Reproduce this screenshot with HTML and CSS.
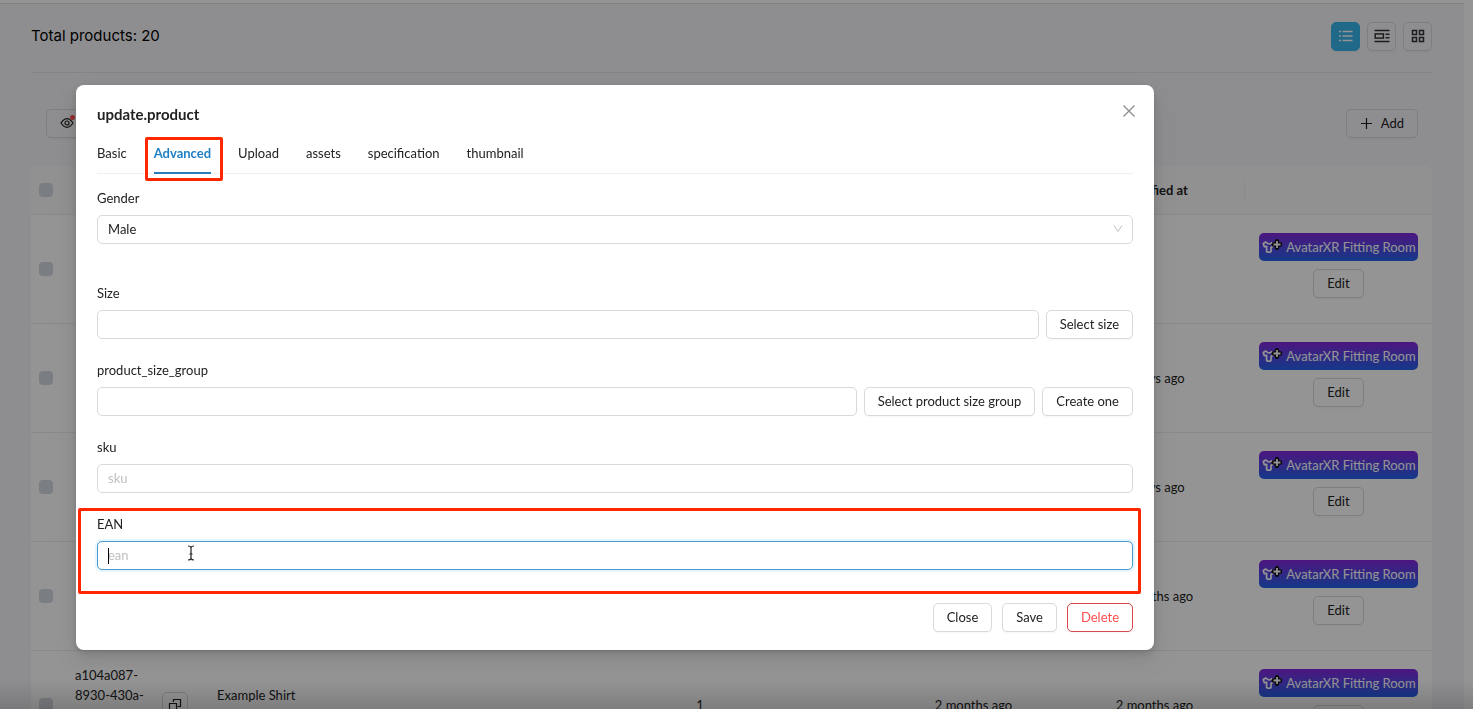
FILE: index.html
```html
<!DOCTYPE html>
<html lang="en">
<head>
<meta charset="utf-8">
<title>Products</title>
<link rel="stylesheet" href="styles.css">
</head>
<body>
<svg class="defs" aria-hidden="true">
  <symbol id="shirt" viewBox="0 0 20 16">
    <path d="M4.200 2.800 1.300 4.500 2.200 7.600 4.600 7.300v5.200q2.200 1.500 4.400 0V8.500L12 6.500M4.200 2.800Q5 5 7 5t3.200-1.700" fill="none" stroke="#fff" stroke-width="1.700" stroke-linejoin="round"/>
    <path d="M15 2.200v6.600M11.700 5.500h6.600" stroke="#111" stroke-width="4.400" stroke-linecap="round"/>
    <path d="M15 2v7M11.500 5.500h7" stroke="#fff" stroke-width="1.800"/>
  </symbol>
</svg>
<div class="page">
  <main class="content">
    <header class="head">
      <h1 class="total">Total products: 20</h1>
      <div class="views">
        <button class="btn icon-btn active" aria-label="List"><svg width="16" height="16" viewBox="0 0 16 16"><path d="M4.500 3.500h10M4.500 8h10M4.500 12.500h10M1 3.500h2M1 8h2M1 12.500h2" stroke="#fff" stroke-width="1.300"/></svg></button>
        <button class="btn icon-btn" aria-label="Detailed list"><svg width="16" height="16" viewBox="0 0 16 16" fill="none" stroke="#333" stroke-width="1.500"><path d="M.5 2.500h15M.5 13.500h15M11.500 6.200h4M11.500 9.800h4"/><rect x="1.200" y="5.900" width="8.200" height="4.200"/></svg></button>
        <button class="btn icon-btn" aria-label="Grid"><svg width="14" height="14" viewBox="0 0 14 14" fill="none" stroke="#333" stroke-width="1.500"><path d="M1.500 1.500h4v4h-4zM8.500 1.500h4v4h-4zM1.500 8.500h4v4h-4zM8.500 8.500h4v4h-4z"/></svg></button>
      </div>
    </header>
    <div class="toolbar">
      <button class="btn eye" aria-label="Columns"><svg width="14" height="14" viewBox="0 0 14 14" fill="none" stroke="#222" stroke-width="1.200"><path d="M1 7q6-8.600 12 0-6 8.600-12 0z"/><circle cx="7" cy="7" r="2"/></svg><span class="dot"></span></button>
      <button class="btn add"><svg width="13" height="13" viewBox="0 0 13 13" stroke="#222" stroke-width="1.200"><path d="M6.500 1v11M1 6.500h11"/></svg>Add</button>
    </div>
    <table class="products">
      <colgroup><col class="c-check"><col class="c-id"><col class="c-name"><col class="c-count"><col class="c-date"><col class="c-date"><col class="c-act"></colgroup>
      <thead><tr><th><input type="checkbox" aria-label="Select all"></th><th></th><th></th><th></th><th></th><th>Modified at</th><th class="last"></th></tr></thead>
      <tbody>
        <tr><td><input type="checkbox" aria-label="Select row"></td><td></td><td></td><td></td><td></td><td></td><td class="act"><button class="fit"><svg width="20" height="16"><use href="#shirt"/></svg>AvatarXR Fitting Room</button><button class="btn">Edit</button></td></tr>
        <tr><td><input type="checkbox" aria-label="Select row"></td><td></td><td></td><td></td><td></td><td>2 days ago</td><td class="act"><button class="fit"><svg width="20" height="16"><use href="#shirt"/></svg>AvatarXR Fitting Room</button><button class="btn">Edit</button></td></tr>
        <tr><td><input type="checkbox" aria-label="Select row"></td><td></td><td></td><td></td><td></td><td>2 days ago</td><td class="act"><button class="fit"><svg width="20" height="16"><use href="#shirt"/></svg>AvatarXR Fitting Room</button><button class="btn">Edit</button></td></tr>
        <tr><td><input type="checkbox" aria-label="Select row"></td><td></td><td></td><td></td><td></td><td>2 months ago</td><td class="act"><button class="fit"><svg width="20" height="16"><use href="#shirt"/></svg>AvatarXR Fitting Room</button><button class="btn">Edit</button></td></tr>
        <tr><td><input type="checkbox" aria-label="Select row"></td><td><div class="id"><span class="id-text">a104a087-<br>8930-430a-</span><button class="btn copy" aria-label="Copy"><svg width="14" height="14" viewBox="0 0 14 14" fill="none" stroke="#222" stroke-width="1.200"><path d="M5.500 4V1.500h7v7H9.500M1.500 5.500h7v7h-7z"/></svg></button></div></td><td class="name">Example Shirt</td><td>1</td><td>2 months ago</td><td>2 months ago</td><td class="act"><button class="fit"><svg width="20" height="16"><use href="#shirt"/></svg>AvatarXR Fitting Room</button><button class="btn">Edit</button></td></tr>
      </tbody>
    </table>
  </main>
</div>
<div class="mask">
  <section class="modal" role="dialog" aria-labelledby="title">
    <button class="x" aria-label="Dismiss"><svg width="14" height="14" viewBox="0 0 14 14" stroke="#8c8c8c" stroke-width="1.300"><path d="M1.500 1.500l11 11M12.500 1.500l-11 11"/></svg></button>
    <h2 class="title" id="title">update.product</h2>
    <div class="tabs" role="tablist">
      <button class="tab" role="tab">Basic</button>
      <button class="tab selected" role="tab" aria-selected="true">Advanced</button>
      <button class="tab" role="tab">Upload</button>
      <button class="tab" role="tab">assets</button>
      <button class="tab" role="tab">specification</button>
      <button class="tab" role="tab">thumbnail</button>
    </div>
    <form class="form">
      <div class="item wide-gap">
        <label for="gender">Gender</label>
        <div class="row select"><select class="field" id="gender"><option>Male</option></select><svg class="chev" width="10" height="10" viewBox="0 0 10 10" fill="none" stroke="#bfbfbf"><path d="M1 1.500l4 6 4-6"/></svg></div>
      </div>
      <div class="item">
        <label for="size">Size</label>
        <div class="row"><input class="field" id="size" type="text"><button class="btn" type="button">Select size</button></div>
      </div>
      <div class="item">
        <label for="group">product_size_group</label>
        <div class="row"><input class="field" id="group" type="text"><button class="btn" type="button">Select product size group</button><button class="btn" type="button">Create one</button></div>
      </div>
      <div class="item">
        <label for="sku">sku</label>
        <div class="row"><input class="field" id="sku" type="text" placeholder="sku"></div>
      </div>
      <div class="item marked">
        <label for="ean">EAN</label>
        <div class="row"><input class="field focused" id="ean" type="text" placeholder="ean"><span class="caret"></span><svg class="ibeam" width="8" height="16" viewBox="0 0 8 16" fill="none" stroke="#222" stroke-width="1.200"><path d="M1 1q2.500 0 3 1.500Q4.500 1 7 1M4 2v12M1 15q2.500 0 3-1.500Q4.500 15 7 15M2.500 9h3"/></svg></div>
      </div>
    </form>
    <footer class="foot"><button class="btn">Close</button><button class="btn">Save</button><button class="btn danger">Delete</button></footer>
  </section>
</div>
</body>
</html>
```
FILE: styles.css
```css
* { box-sizing: border-box; }
body {
  margin: 0;
  height: 100vh;
  overflow: hidden;
  font: 13px/20px Lato, sans-serif;
  color: #222;
  background: #fff;
}
button, input, select { font: inherit; color: inherit; }
.defs { position: absolute; width: 0; height: 0; }
.page {
  height: 100vh;
  margin-right: 9px;
  overflow: hidden;
  background: #f5f5f9;
  border-top: 3px solid #fff;
}
.content {
  border-top: 1px solid #dcdcdf;
  padding: 0 32px 0 31px;
}
.head {
  display: flex;
  justify-content: space-between;
  align-items: center;
  height: 69px;
  padding-bottom: 4px;
  border-bottom: 1px solid #e4e4e8;
}
.total { margin: 0; font: 400 15px/20px Inter, sans-serif; color: #000; }
.views { display: flex; gap: 7px; }
.btn {
  height: 29px;
  padding: 0 13px 1px;
  border: 1px solid #d9d9d9;
  border-radius: 5px;
  background: #fff;
  white-space: nowrap;
  box-shadow: 0 2px 0 rgba(0, 0, 0, 0.02);
}
.icon-btn {
  display: grid;
  place-items: center;
  width: 29px;
  padding: 0;
  background: transparent;
}
.active { background: #38b6ec; border-color: #38b6ec; }
.toolbar {
  display: flex;
  justify-content: space-between;
  padding: 36px 14px 28px 15px;
}
.toolbar .btn { display: flex; align-items: center; gap: 8px; background: transparent; }
.eye .dot {
  width: 5px;
  height: 5px;
  margin: -12px 0 0 -12px;
  border-radius: 50%;
  background: #ff4d4f;
}
.products {
  width: 100%;
  table-layout: fixed;
  border-collapse: separate;
  border-spacing: 0;
  border-radius: 7px 7px 0 0;
  overflow: hidden;
  background: #fff;
}
.products th, .products td { padding: 0; text-align: center; border-bottom: 1px solid #ededed; }
.products th {
  height: 49px;
  background: linear-gradient(#f0f0f0, #f0f0f0) right center / 1px 20px no-repeat #fafafa;
}
.products th:not(:nth-last-child(2)) { background: #fafafa; }
.products td { height: 109px; }
.c-check { width: 30px; }
.c-id { width: 141px; }
.c-name { width: 315px; }
.c-date { width: 181px; }
.c-act { width: 187px; }
.products input {
  display: block;
  appearance: none;
  width: 14px;
  height: 14px;
  margin: 0 0 0 8px;
  border-radius: 4px;
  background: #d3d7df;
}
.products .act { padding: 0 0 7px; }
.act .btn { display: block; margin: 8px auto 0; }
.fit {
  display: flex;
  align-items: center;
  gap: 4px;
  height: 28px;
  margin: 0 auto;
  padding: 0 2px 0 3px;
  border: 0;
  border-radius: 5px;
  color: #fff;
  background: linear-gradient(#8526dc, #2463eb);
  white-space: nowrap;
}
.id { display: flex; align-items: center; height: 80px; padding-left: 14px; text-align: left; }
.id-text { width: 87px; height: 80px; }
.copy { display: grid; place-items: center; width: 26px; height: 26px; padding: 0; background: #fff; }
.products .name { padding: 0 0 20px 15px; text-align: left; }

.mask {
  position: fixed;
  inset: 0;
  padding: 85px 319px 0 76px;
  background: linear-gradient(transparent 680px, rgba(0, 0, 0, 0.15)) rgba(0, 0, 0, 0.42);
}
.modal {
  position: relative;
  padding: 19px 21px 18px;
  border-radius: 8px;
  background: #fff;
  box-shadow: 0 6px 16px rgba(0, 0, 0, 0.08), 0 3px 6px rgba(0, 0, 0, 0.12), 0 9px 28px 8px rgba(0, 0, 0, 0.05);
}
.x {
  position: absolute;
  top: 19px;
  right: 18px;
  display: grid;
  padding: 0;
  border: 0;
  background: none;
}
.title { margin: 0; font-size: 15px; line-height: 20px; font-weight: 700; }
.tabs { display: flex; gap: 27px; margin-top: 9px; border-bottom: 1px solid #f0f0f0; }
.tab {
  position: relative;
  height: 41px;
  margin-bottom: -1px;
  padding: 0 0 2px;
  border: 0;
  background: none;
}
.selected { font-weight: 700; color: #1f7fc4; border-bottom: 2px solid #2a7dbb; padding-bottom: 0; }
.selected::after {
  content: "";
  position: absolute;
  inset: 4px -12px -9px -9px;
  border: 3px solid #ff2600;
  border-radius: 2px;
}
.form { margin-top: 14px; }
.item { position: relative; margin-bottom: 21px; }
.wide-gap { margin-bottom: 39px; }
.item label { display: block; margin-bottom: 7px; line-height: 20px; }
.row { position: relative; display: flex; gap: 7px; }
.field {
  flex: 1;
  min-width: 0;
  height: 29px;
  padding: 0 10px 1px;
  border: 1px solid #d9d9d9;
  border-radius: 5px;
  outline: 0;
  appearance: none;
  background: #fff;
}
.field::placeholder { color: #bfbfbf; }
.focused { border-color: #4a9ace; box-shadow: 0 0 0 2px rgba(80, 190, 255, 0.14); }
.chev { position: absolute; right: 10px; top: 9px; }
.caret { position: absolute; left: 11px; top: 7px; width: 1px; height: 16px; background: #000; }
.ibeam { position: absolute; left: 90px; top: 4px; }
.marked { margin-bottom: 33px; }
.marked::after {
  content: "";
  position: absolute;
  inset: -6px -8px -24px -19px;
  border: 3px solid #ff2600;
  border-radius: 2px;
  pointer-events: none;
}
.foot { display: flex; justify-content: flex-end; gap: 10px; }
.danger { color: #ff4d4f; border-color: #d9484f; }
```
